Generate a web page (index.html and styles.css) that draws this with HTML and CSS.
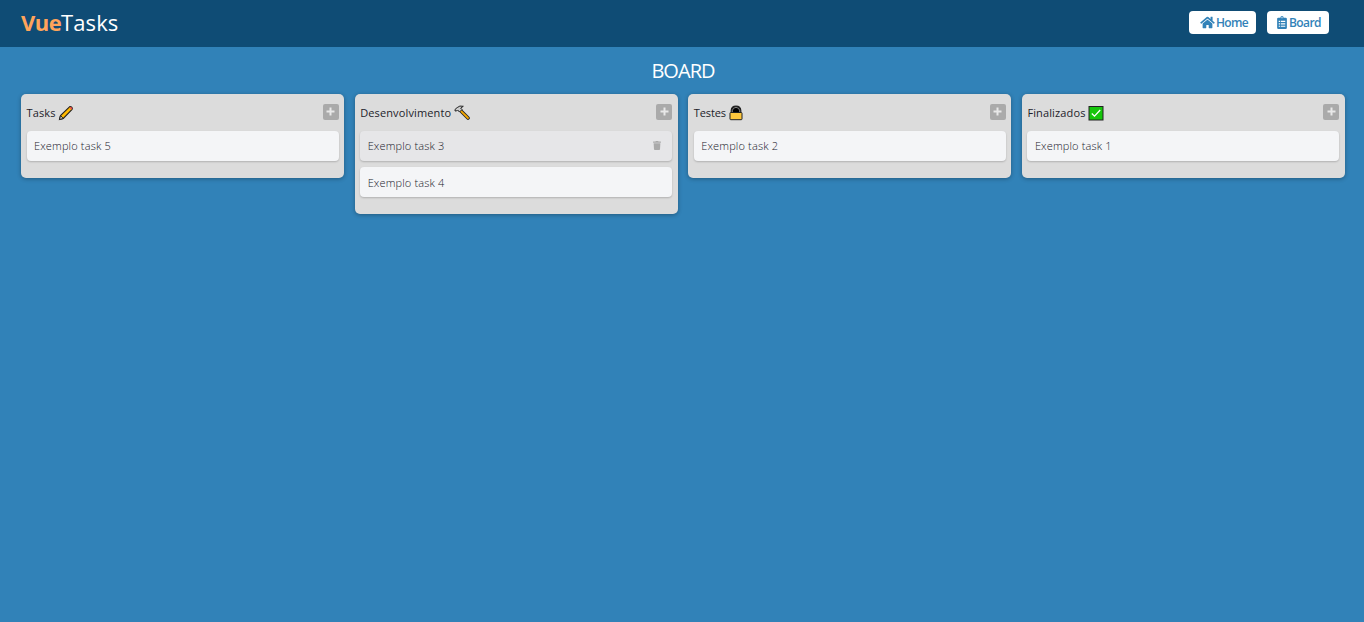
FILE: index.html
```html
<!DOCTYPE html>
<html lang="pt-BR">
<head>
<meta charset="utf-8">
<title>VueTasks</title>
<link rel="stylesheet" href="styles.css">
</head>
<body>
<svg class="defs" width="0" height="0">
  <symbol id="plus" viewBox="0 0 9 9"><path d="M3.500.5h2v3h3v2h-3v3h-2v-3h-3v-2h3z"/></symbol>
</svg>
<header class="navbar">
  <a class="brand"><b class="brand-vue">Vue</b><span class="brand-tasks">Tasks</span></a>
  <nav class="nav">
    <a class="nav-link home">
      <svg class="home-icon" viewBox="0 0 576 512"><path d="M280.400 148.300L96 300.100V464a16 16 0 0 0 16 16l112.100-.3a16 16 0 0 0 15.900-16V368a16 16 0 0 1 16-16h64a16 16 0 0 1 16 16v95.600a16 16 0 0 0 16 16L464 480a16 16 0 0 0 16-16V300L295.700 148.300a12.200 12.200 0 0 0-15.300 0zM571.600 251.500L488 182.600V44a12 12 0 0 0-12-12h-56a12 12 0 0 0-12 12v72.600L318.500 43a48 48 0 0 0-61 0L4.300 251.500a12 12 0 0 0-1.600 16.900l25.500 31a12 12 0 0 0 16.900 1.600L280.400 107.200a12.200 12.200 0 0 1 15.300 0L530.900 301a12 12 0 0 0 16.900-1.600l25.500-31a12 12 0 0 0-1.700-16.900z"/></svg>
      <span class="home-label">Home</span>
    </a>
    <a class="nav-link board-link">
      <svg class="clip-icon" viewBox="0 0 384 512"><path fill-rule="evenodd" d="M336 64h-80a64 64 0 0 0-128 0H48a48 48 0 0 0-48 48v352a48 48 0 0 0 48 48h288a48 48 0 0 0 48-48V112a48 48 0 0 0-48-48zM192 40a24 24 0 1 1 0 48 24 24 0 0 1 0-48zM64 190h55v44H64zM150 190h170v44H150zM64 286h55v44H64zM150 286h170v44H150zM64 382h55v44H64zM150 382h170v44H150z"/></svg>
      <span class="board-label">Board</span>
    </a>
  </nav>
</header>
<main class="page">
  <h1 class="title">BOARD</h1>
  <div class="columns">
    <section class="column">
      <header class="column-head">
        <h2 class="column-name">Tasks</h2>
        <svg class="emoji" viewBox="0 0 16 16"><path d="M1.500 14.500l1-4L11.500 1.800q1-.8 2.200.4t.4 2.200L5.300 13.500z" fill="#ffb900" stroke="#222" stroke-width="1.100"/><path d="M2.500 10.500l2.800 3-3.800 1z" fill="#ddd0b8" stroke="#222"/><path d="M11.500 2.500l1.200-.8 1.700 1.800-.8 1.200z" fill="#e74856"/></svg>
        <button class="add"><svg class="plus"><use href="#plus"/></svg></button>
      </header>
      <article class="task"><span class="task-text">Exemplo task 5</span></article>
    </section>
    <section class="column">
      <header class="column-head">
        <h2 class="column-name">Desenvolvimento</h2>
        <svg class="emoji" viewBox="0 0 16 16"><path d="M6 5l8 8" stroke="#222" stroke-width="3.600" stroke-linecap="round"/><path d="M6.300 5.300l7.700 7.700" stroke="#f5a800" stroke-width="1.800" stroke-linecap="round"/><path d="M1 6l1.800-.2L3.600 5l1.900 2L8 4.500 6.700 3.200 9.300 1.300Q5.500.2 3.200 2.600L1.200 4.200z" fill="#ccc" stroke="#222"/></svg>
        <button class="add"><svg class="plus"><use href="#plus"/></svg></button>
      </header>
      <article class="task hovered"><span class="task-text">Exemplo task 3</span>
        <svg class="trash" viewBox="0 0 448 512"><path d="M432 32H312l-10-19a24 24 0 0 0-21-13H167a24 24 0 0 0-21 13l-10 19H16A16 16 0 0 0 0 48v32a16 16 0 0 0 16 16h416a16 16 0 0 0 16-16V48a16 16 0 0 0-16-16zM32 128l21 339a48 48 0 0 0 48 45h246a48 48 0 0 0 48-45l21-339z"/></svg>
      </article>
      <article class="task second"><span class="task-text">Exemplo task 4</span></article>
    </section>
    <section class="column">
      <header class="column-head">
        <h2 class="column-name testes">Testes</h2>
        <svg class="emoji" viewBox="0 0 16 16"><path d="M3.200 8V5.500Q3.500 1.200 8 1.200t4.800 4.300V8z" fill="#000" stroke="#222" stroke-width="1.200"/><path d="M4.300 7V5.700Q4.600 2.400 8 2.400t3.700 3.300V7" fill="none" stroke="#aaa" stroke-width=".8"/><rect x="2" y="7.500" width="12" height="7.200" rx=".8" fill="#ffc83d" stroke="#222"/></svg>
        <button class="add"><svg class="plus"><use href="#plus"/></svg></button>
      </header>
      <article class="task"><span class="task-text">Exemplo task 2</span></article>
    </section>
    <section class="column">
      <header class="column-head">
        <h2 class="column-name">Finalizados</h2>
        <svg class="emoji" viewBox="0 0 16 16"><rect x="1" y="1.500" width="14" height="13.500" fill="#16c60c" stroke="#222"/><path d="M3.800 8.500l2.700 2.600L12.200 5" fill="none" stroke="#fff" stroke-width="1.300"/></svg>
        <button class="add"><svg class="plus"><use href="#plus"/></svg></button>
      </header>
      <article class="task"><span class="task-text">Exemplo task 1</span></article>
    </section>
  </div>
</main>
</body>
</html>
```
FILE: styles.css
```css
* { box-sizing: border-box; }
body {
  margin: 0;
  min-height: 100vh;
  background: #3182b8;
  font-family: "Open Sans", "Noto Sans", sans-serif;
}
.defs { position: absolute; }
.navbar {
  display: flex;
  justify-content: space-between;
  align-items: center;
  height: 47px;
  padding: 0 35px 2px 21px;
  background: #0f4c75;
}
.brand { display: flex; font-size: 22px; line-height: 30px; color: #fff; padding-bottom: 1px; }
.brand-vue { width: 40px; color: #ffa45b; letter-spacing: -0.5px; }
.brand-tasks { letter-spacing: 0.1px; }
.nav { display: flex; gap: 11px; }
.nav-link {
  display: flex;
  align-items: center;
  height: 23px;
  border-radius: 4px;
  background: #fff;
  color: #3282b8;
  font-size: 12px;
  font-weight: 600;
}
.home { width: 67px; padding-left: 11px; gap: 1px; }
.board-link { width: 62px; padding-left: 10px; gap: 2px; }
.home-icon { width: 15px; height: 13px; fill: currentColor; }
.clip-icon { width: 10px; height: 13px; fill: currentColor; }
.home-label { letter-spacing: -0.7px; }
.board-label { letter-spacing: -0.6px; }
.page { padding: 11px 19px 0 21px; }
.title {
  margin: 0 0 10px;
  height: 26px;
  line-height: 26px;
  color: #fff;
  font-size: 20px;
  font-weight: 500;
  letter-spacing: -0.95px;
  text-align: center;
}
.columns {
  display: grid;
  grid-template-columns: repeat(4, 1fr);
  gap: 10.5px;
  align-items: start;
}
.column {
  padding: 9px 5.600px 11px 5.500px;
  border-radius: 5px;
  background: #dcdcdc;
  box-shadow: 0 1px 4px rgba(0, 0, 0, 0.3);
}
.column-head { display: flex; align-items: center; height: 18px; margin-bottom: 10px; }
.column-name {
  margin: 0;
  padding-top: 2px;
  color: #1d1d2b;
  font-size: 11px;
  font-weight: 400;
  line-height: 18px;
  letter-spacing: 0.13px;
  white-space: nowrap;
}
.testes { letter-spacing: -0.1px; }
.emoji { width: 16px; height: 16px; margin-top: 1px; margin-left: 2.500px; fill: none; }
.add {
  display: flex;
  align-items: center;
  justify-content: center;
  width: 16px;
  height: 16px;
  margin-top: 1px;
  margin-left: auto;
  padding: 0 0 1px;
  border: 0;
  border-radius: 2px;
  background: #aaa;
  align-self: flex-start;
}
.plus { width: 9px; height: 9px; fill: #e8e8e8; }
.task {
  display: flex;
  align-items: center;
  justify-content: space-between;
  height: 30px;
  margin-bottom: 6px;
  padding: 0 11px 2px 7.500px;
  border-radius: 4px;
  background: #f4f5f7;
  box-shadow: 0 1px 2px rgba(0, 0, 0, 0.2);
}
.second { padding-bottom: 0; }
.hovered { background: #e6e6e8; }
.task-text { color: #20202c; font-size: 11px; font-weight: 300; letter-spacing: 0.15px; white-space: nowrap; }
.trash { width: 8px; height: 9px; fill: #aaa; }
```
